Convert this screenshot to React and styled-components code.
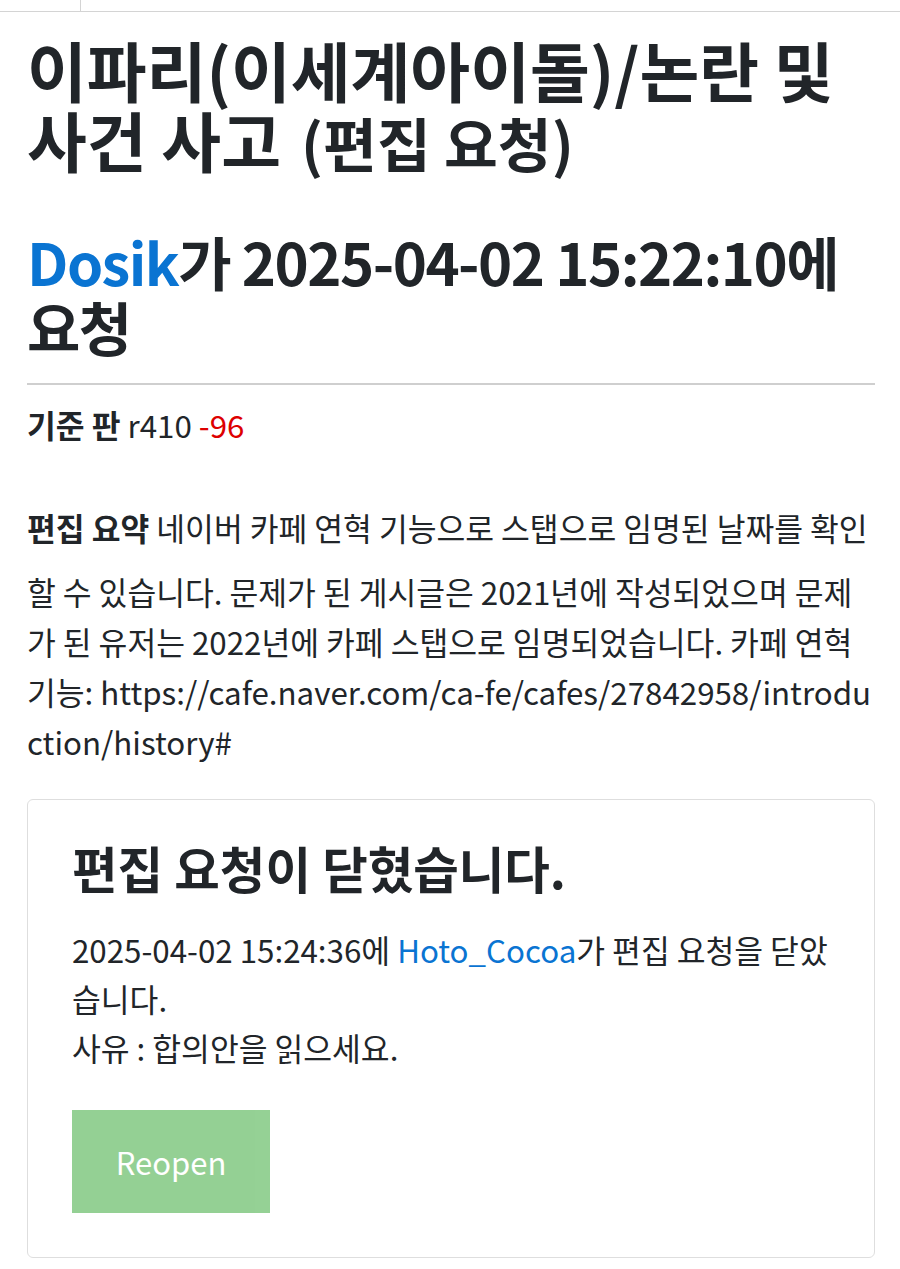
import React from 'react';
import styled, { createGlobalStyle } from 'styled-components';

const Global = createGlobalStyle`
  html, body { margin: 0; padding: 0; background: #fff; }
  body {
    font-family: "Noto Sans CJK KR", "Noto Sans", sans-serif;
    color: #212529;
  }
`;

const TopBar = styled.div`
  display: flex;
  height: 11px;
  border-bottom: 1px solid #d4d4d4;
`;

const TopTab = styled.div`
  width: 80px;
  border-right: 1px solid #d4d4d4;
`;

const Page = styled.main`
  padding: 0 25px 0 27px;
`;

const Title = styled.h1`
  margin: 22px 0 0;
  font-size: 65px;
  line-height: 70px;
  font-weight: 700;
`;

const TitleSmall = styled.small`
  font-size: 0.9em;
  margin-left: 20px;
`;

const SubTitle = styled.h2`
  margin: 52px 0 0;
  padding-bottom: 24px;
  font-size: 58px;
  line-height: 65px;
  letter-spacing: -1.5px;
  font-weight: 700;
  border-bottom: 2px solid #cfcfcf;
`;

const UserLink = styled.a`
  color: #0a74d2;
  text-decoration: none;
`;

const Meta = styled.p`
  margin: 15px 0 0;
  font-size: 31.3px;
  line-height: 50px;
`;

const Diff = styled.span`
  color: #d00;
`;

const Summary = styled.p`
  margin: 39px 0 0;
  font-size: 31.3px;
  line-height: 50px;
  word-break: break-all;
`;

const Label = styled.strong`
  font-weight: 700;
  line-height: ${p => p.$tall ? '78px' : 'inherit'};
`;

const Card = styled.section`
  margin-top: 32px;
  border: 1px solid #dedede;
  border-radius: 6px;
  padding: 38px 44px 44px;
`;

const CardTitle = styled.h3`
  margin: 0;
  font-size: 49.5px;
  line-height: 60px;
  font-weight: 700;
`;

const CardText = styled.p`
  margin: 27px 0 0;
  font-size: 31.3px;
  line-height: 49px;
`;

const ReopenButton = styled.button`
  display: block;
  margin-top: 38px;
  width: 198px;
  height: 103px;
  border: none;
  border-radius: 0;
  background: #5cb85c;
  opacity: 0.65;
  color: #fff;
  font-family: inherit;
  font-size: 31px;
  cursor: not-allowed;
`;

export default function App() {
  return (
    <>
      <Global />
      <TopBar><TopTab /></TopBar>
      <Page>
        <Title>
          이파리(이세계아이돌)/논란 및 사건 사고<TitleSmall>(편집 요청)</TitleSmall>
        </Title>
        <SubTitle>
          <UserLink href="#">Dosik</UserLink>가 2025-04-02 15:22:10에 요청
        </SubTitle>
        <Meta>
          <Label>기준 판</Label> r410 <Diff>-96</Diff>
        </Meta>
        <Summary>
          <Label $tall>편집 요약</Label> 네이버 카페 연혁 기능으로 스탭으로 임명된 날짜를 확인할 수 있습니다. 문제가 된 게시글은 2021년에 작성되었으며 문제가 된 유저는 2022년에 카페 스탭으로 임명되었습니다. 카페 연혁 기능: https://cafe.naver.com/ca-fe/cafes/27842958/introduction/history#
        </Summary>
        <Card>
          <CardTitle>편집 요청이 닫혔습니다.</CardTitle>
          <CardText>
            2025-04-02 15:24:36에 <UserLink href="#">Hoto_Cocoa</UserLink>가 편집 요청을 닫았습니다.<br />
            사유 : 합의안을 읽으세요.
          </CardText>
          <ReopenButton disabled>Reopen</ReopenButton>
        </Card>
      </Page>
    </>
  );
}
